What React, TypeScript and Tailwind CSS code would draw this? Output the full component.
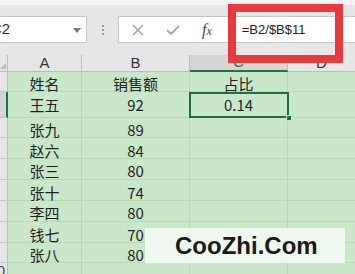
import React from "react";

const rows = [
  { a: "姓名", b: "销售额", c: "占比", h: "h-[20px]", pb: "pb-0" },
  { a: "王五", b: "92", c: "0.14", h: "h-[26px]", pb: "pb-[5px]" },
  { a: "张九", b: "89", c: "", h: "h-[20px]", pb: "pb-0" },
  { a: "赵六", b: "84", c: "", h: "h-[21px]", pb: "pb-0" },
  { a: "张三", b: "80", c: "", h: "h-[21px]", pb: "pb-[1px]" },
  { a: "张十", b: "74", c: "", h: "h-[21px]", pb: "pb-0" },
  { a: "李四", b: "80", c: "", h: "h-[21px]", pb: "pb-[1px]" },
  { a: "钱七", b: "70", c: "", h: "h-[21px]", pb: "pb-0" },
  { a: "张八", b: "80", c: "", h: "h-[20px]", pb: "pb-0" },
  { a: "", b: "", c: "", h: "h-[20px]", pb: "pb-0" },
];

const cell =
  "flex items-end justify-center border-r border-b border-[#b8d8b8] bg-[#c9e8c9] text-[15px] leading-[15px] text-[#1f1f1f]";

export default function App() {
  return (
    <div
      className="relative w-[355px] h-[274px] overflow-hidden bg-[#e6e6e6]"
      style={{ fontFamily: '"Noto Sans CJK SC", "Liberation Sans", sans-serif' }}
    >
      <div className="h-[5px] bg-[#f3f3f3]" />
      <div className="h-[50px] pt-[11px] flex items-start">
        <div className="w-[87px] h-[27px] bg-white border border-[#c8c8c8] border-l-0 flex items-center overflow-hidden relative">
          <span
            className="ml-[-9px] text-[15px] text-[#333]"
            style={{ fontFamily: '"Liberation Sans", sans-serif' }}
          >
            C2
          </span>
          <div className="absolute left-[73px] top-[11px] w-0 h-0 border-l-[4px] border-r-[4px] border-t-[5px] border-l-transparent border-r-transparent border-t-[#777]" />
        </div>
        <div className="w-[31px] h-[27px] flex flex-col items-center justify-center gap-[2px]">
          <div className="w-[2px] h-[2px] bg-[#9a9a9a]" />
          <div className="w-[2px] h-[2px] bg-[#9a9a9a]" />
          <div className="w-[2px] h-[2px] bg-[#9a9a9a]" />
        </div>
        <div className="flex-1 h-[27px] bg-white border border-[#c8c8c8] border-r-0 flex items-center">
          <svg width="12" height="12" viewBox="0 0 12 12" className="ml-[13px]">
            <path d="M1 1 L11 11 M11 1 L1 11" stroke="#a8a8a8" strokeWidth="1.6" fill="none" />
          </svg>
          <svg width="14" height="12" viewBox="0 0 14 12" className="ml-[22px]">
            <path d="M1 6 L5 10 L13 2" stroke="#a8a8a8" strokeWidth="1.8" fill="none" />
          </svg>
          <span
            className="ml-[22px] text-[16px] italic text-[#444] leading-none"
            style={{ fontFamily: '"Liberation Serif", serif' }}
          >
            f<span className="text-[12px]">x</span>
          </span>
          <span
            className="ml-[30px] text-[13px] text-[#222]"
            style={{ fontFamily: '"Liberation Sans", sans-serif' }}
          >
            =B2/$B$11
          </span>
        </div>
      </div>

      <div className="relative">
        <div className="grid grid-cols-[8px_74px_108px_98px_67px]">
          <div className="h-[17px] bg-[#e6e6e6] border-r border-b border-[#bcbcbc] relative overflow-hidden">
            <div className="absolute right-[1px] bottom-[2px] w-0 h-0 border-l-[6px] border-t-[6px] border-l-transparent border-t-transparent border-b-0 border-r-[6px] border-r-[#bdbdbd]" />
          </div>
          <div
            className="h-[17px] bg-[#e6e6e6] border-r border-b border-[#bcbcbc] flex items-center justify-center text-[15px] text-[#333]"
            style={{ fontFamily: '"Liberation Sans", sans-serif' }}
          >
            A
          </div>
          <div
            className="h-[17px] bg-[#e6e6e6] border-r border-b border-[#bcbcbc] flex items-center justify-center text-[15px] text-[#333]"
            style={{ fontFamily: '"Liberation Sans", sans-serif' }}
          >
            B
          </div>
          <div
            className="h-[17px] bg-[#d6d6d6] border-r border-b-2 border-r-[#bcbcbc] border-b-[#217346] flex items-center justify-center text-[15px] text-[#217346]"
            style={{ fontFamily: '"Liberation Sans", sans-serif' }}
          >
            C
          </div>
          <div
            className="h-[17px] bg-[#e6e6e6] border-b border-[#bcbcbc] flex items-center justify-center text-[15px] text-[#333]"
            style={{ fontFamily: '"Liberation Sans", sans-serif' }}
          >
            D
          </div>

          {rows.map((r, i) => (
            <React.Fragment key={i}>
              <div
                className={`${r.h} ${
                  i === 1 ? "bg-[#d4d4d4] border-r-2 border-r-[#217346]" : "bg-[#e6e6e6] border-r border-r-[#bcbcbc]"
                } border-b border-b-[#c4c4c4] relative overflow-hidden`}
              >
                {i === 9 && (
                  <span
                    className="absolute right-[2px] top-[1px] text-[14px] leading-none text-[#444]"
                    style={{ fontFamily: '"Liberation Sans", sans-serif' }}
                  >
                    10
                  </span>
                )}
              </div>
              <div className={`${r.h} ${r.pb} ${cell}`}>{r.a}</div>
              <div className={`${r.h} ${r.pb} ${cell}`}>{r.b}</div>
              <div className={`${r.h} ${r.pb} ${cell}`}>{r.c}</div>
              <div className={`${r.h} ${cell} border-r-0`}></div>
            </React.Fragment>
          ))}
        </div>

        <div className="absolute left-[189px] top-[37px] w-[100px] h-[26px] border-2 border-[#1f6b40]">
          <div className="absolute right-[-5px] bottom-[-5px] w-[6px] h-[6px] bg-[#1f6b40] border border-[#c9e8c9]" />
        </div>
      </div>

      <div className="absolute left-[228px] top-[4px] w-[115px] h-[59px] border-[8px] border-[#e63a3e]" />

      <div className="absolute left-[145px] top-[228px] w-[200px] h-[35px] bg-[#eef8ee] flex items-center pl-[30px]">
        <span
          className="text-[24px] font-bold text-[#1a1a1a] leading-none"
          style={{ fontFamily: '"Liberation Sans", sans-serif' }}
        >
          CooZhi.Com
        </span>
      </div>
    </div>
  );
}
